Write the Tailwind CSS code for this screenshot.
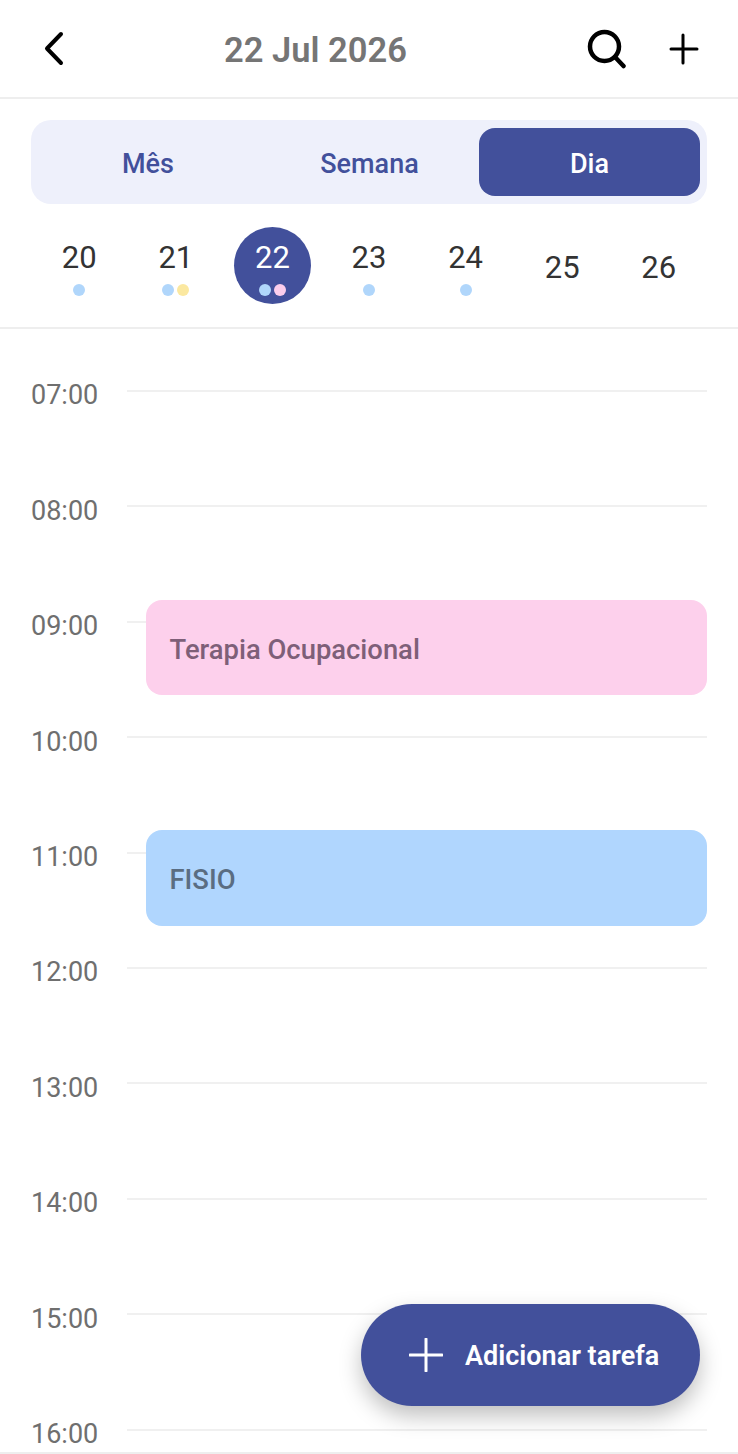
<!DOCTYPE html>
<html lang="pt">
  <head>
    <meta charset="UTF-8" />
    <meta name="viewport" content="width=device-width, initial-scale=1.0" />
    <title>Agenda</title>
    <script src="https://cdn.jsdelivr.net/npm/@tailwindcss/browser@4"></script>
  </head>
  <body class="bg-white font-['Roboto',sans-serif] overflow-hidden">
    <div class="relative w-[738px] h-[1454px] overflow-hidden">
      <!-- Header -->
      <header class="h-[99px] flex items-center justify-between border-b-2 border-[#eeeeee] pl-[38px] pr-[39px]">
        <button class="w-8 h-12 flex items-center">
          <svg width="32" height="40" viewBox="0 0 32 40" fill="none" stroke="#000" stroke-width="4" stroke-linecap="round" stroke-linejoin="round"><path d="M23 5 L9 19.500 L23 34"/></svg>
        </button>
        <h1 class="absolute left-[224px] top-[33px] text-[34.500px] font-semibold text-[#757575] leading-none">22 Jul 2026</h1>
        <div class="flex items-center gap-[41px]">
          <svg width="40" height="40" viewBox="0 0 40 40" fill="none" stroke="#000" stroke-width="4.500" stroke-linecap="round"><circle cx="18.500" cy="17.500" r="14.500"/><path d="M29 28 L37.500 37"/></svg>
          <svg width="32" height="32" viewBox="0 0 32 32" fill="none" stroke="#000" stroke-width="3" stroke-linecap="round"><path d="M16 2 V30 M4 16 H30"/></svg>
        </div>
      </header>

      <!-- Mês / Semana / Dia -->
      <div class="mx-[31px] mt-[21px] h-[84px] rounded-[20px] bg-[#eef0fb] pl-2 pr-[7px] py-2 flex">
        <div class="w-[218px] pt-[5px] flex items-center justify-center text-[27px] font-medium text-[#42509b]">Mês</div>
        <div class="w-[222px] pt-[5px] pl-[3px] flex items-center justify-center text-[27px] font-medium text-[#42509b]">Semana</div>
        <div class="flex-1 pt-[5px] rounded-[16px] bg-[#42509b] flex items-center justify-center text-[27px] font-medium text-white">Dia</div>
      </div>

      <!-- Dias da semana -->
      <div class="mx-[31px] mt-[23px] h-[77px] grid grid-cols-7">
        <div class="flex flex-col items-center justify-center pt-[5px]">
          <span class="text-[31px] leading-[36px] text-[#333333]">20</span>
          <div class="flex gap-[3px] mt-[8px] h-3"><span class="size-3 rounded-full bg-[#b0d6fb]"></span></div>
        </div>
        <div class="flex flex-col items-center justify-center pt-[5px]">
          <span class="text-[31px] leading-[36px] text-[#333333]">21</span>
          <div class="flex gap-[3px] mt-[8px] h-3"><span class="size-3 rounded-full bg-[#b0d6fb]"></span><span class="size-3 rounded-full bg-[#fbe8a0]"></span></div>
        </div>
        <div class="flex justify-center">
          <div class="w-[77px] h-[77px] pt-[5px] rounded-full bg-[#42509b] flex flex-col items-center justify-center">
            <span class="text-[31px] leading-[36px] text-white">22</span>
            <div class="flex gap-[3px] mt-[8px] h-3"><span class="size-3 rounded-full bg-[#b0d6fb]"></span><span class="size-3 rounded-full bg-[#fbcdec]"></span></div>
          </div>
        </div>
        <div class="flex flex-col items-center justify-center pt-[5px]">
          <span class="text-[31px] leading-[36px] text-[#333333]">23</span>
          <div class="flex gap-[3px] mt-[8px] h-3"><span class="size-3 rounded-full bg-[#b0d6fb]"></span></div>
        </div>
        <div class="flex flex-col items-center justify-center pt-[5px]">
          <span class="text-[31px] leading-[36px] text-[#333333]">24</span>
          <div class="flex gap-[3px] mt-[8px] h-3"><span class="size-3 rounded-full bg-[#b0d6fb]"></span></div>
        </div>
        <div class="flex items-center justify-center pt-[5px]"><span class="text-[31px] leading-[36px] text-[#333333]">25</span></div>
        <div class="flex items-center justify-center pt-[5px]"><span class="text-[31px] leading-[36px] text-[#333333]">26</span></div>
      </div>

      <div class="mt-[23px] h-[2px] bg-[#eeeeee]"></div>

      <!-- Horas -->
      <div class="relative pl-[31px] pr-[31px] pt-[50.400px]">
        <div class="h-[115.400px] flex"><span class="w-[96px] text-[27px] leading-[32px] text-[#6f6f6f]">07:00</span><div class="flex-1 mt-[10.600px] h-[2px] bg-[#f0f0f0]"></div></div>
        <div class="h-[115.400px] flex"><span class="w-[96px] text-[27px] leading-[32px] text-[#6f6f6f]">08:00</span><div class="flex-1 mt-[10.600px] h-[2px] bg-[#f0f0f0]"></div></div>
        <div class="h-[115.400px] flex"><span class="w-[96px] text-[27px] leading-[32px] text-[#6f6f6f]">09:00</span><div class="flex-1 mt-[10.600px] h-[2px] bg-[#f0f0f0]"></div></div>
        <div class="h-[115.400px] flex"><span class="w-[96px] text-[27px] leading-[32px] text-[#6f6f6f]">10:00</span><div class="flex-1 mt-[10.600px] h-[2px] bg-[#f0f0f0]"></div></div>
        <div class="h-[115.400px] flex"><span class="w-[96px] text-[27px] leading-[32px] text-[#6f6f6f]">11:00</span><div class="flex-1 mt-[10.600px] h-[2px] bg-[#f0f0f0]"></div></div>
        <div class="h-[115.400px] flex"><span class="w-[96px] text-[27px] leading-[32px] text-[#6f6f6f]">12:00</span><div class="flex-1 mt-[10.600px] h-[2px] bg-[#f0f0f0]"></div></div>
        <div class="h-[115.400px] flex"><span class="w-[96px] text-[27px] leading-[32px] text-[#6f6f6f]">13:00</span><div class="flex-1 mt-[10.600px] h-[2px] bg-[#f0f0f0]"></div></div>
        <div class="h-[115.400px] flex"><span class="w-[96px] text-[27px] leading-[32px] text-[#6f6f6f]">14:00</span><div class="flex-1 mt-[10.600px] h-[2px] bg-[#f0f0f0]"></div></div>
        <div class="h-[115.400px] flex"><span class="w-[96px] text-[27px] leading-[32px] text-[#6f6f6f]">15:00</span><div class="flex-1 mt-[10.600px] h-[2px] bg-[#f0f0f0]"></div></div>
        <div class="h-[115.400px] flex"><span class="w-[96px] text-[27px] leading-[32px] text-[#6f6f6f]">16:00</span><div class="flex-1 mt-[10.600px] h-[2px] bg-[#f0f0f0]"></div></div>

        <!-- Eventos -->
        <div class="absolute left-[146px] right-[31px] top-[271px] h-[95px] rounded-[16px] bg-[#fdd0ec] flex items-center pl-[23.500px] pt-[6px] text-[27.400px] font-medium text-[#7e5f78]">Terapia Ocupacional</div>
        <div class="absolute left-[146px] right-[31px] top-[501px] h-[96px] rounded-[16px] bg-[#b0d6fe] flex items-center pl-[23.500px] pt-[5px] text-[27.400px] font-medium text-[#5a6d82]">FISIO</div>
      </div>

      <!-- Botão flutuante -->
      <button class="absolute left-[361px] top-[1304px] w-[339px] h-[102px] rounded-full bg-[#42509b] shadow-[0_10px_22px_rgba(0,0,0,0.25)] flex items-center pl-[48px] gap-[22px] pt-[3px] text-[27px] font-semibold text-white">
        <svg class="-mt-[3px]" width="34" height="34" viewBox="0 0 34 34" fill="none" stroke="#fff" stroke-width="3" stroke-linecap="round"><path d="M17 1 V33 M1 17 H33"/></svg>
        Adicionar tarefa
      </button>

      <div class="absolute left-0 right-0 bottom-0 h-[2px] bg-[#eeeeee]"></div>
    </div>
  </body>
</html>
